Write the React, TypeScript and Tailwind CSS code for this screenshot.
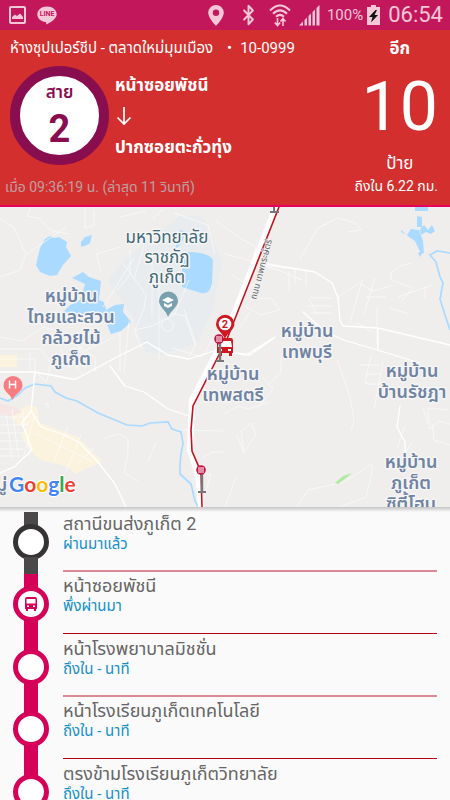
import React from "react";
import { Bluetooth } from "lucide-react";

const stops = [
  { name: "สถานีขนส่งภูเก็ต 2", status: "ผ่านมาแล้ว", state: "passed" },
  { name: "หน้าซอยพัชนี", status: "พึ่งผ่านมา", state: "current" },
  { name: "หน้าโรงพยาบาลมิชชั่น", status: "ถึงใน - นาที", state: "next" },
  { name: "หน้าโรงเรียนภูเก็ตเทคโนโลยี", status: "ถึงใน - นาที", state: "next" },
  { name: "ตรงข้ามโรงเรียนภูเก็ตวิทยาลัย", status: "ถึงใน - นาที", state: "next" },
];

function StatusBar() {
  return (
    <div className="flex h-[30px] shrink-0 items-center justify-between bg-[#c2185b] pr-[7px] pl-[9px] text-[#f3c6d8]">
      <div className="flex items-center gap-[11px]">
        <svg viewBox="0 0 17 18" className="h-[18px] w-[17px]" aria-hidden="true">
          <rect x="1" y="1" width="15" height="16" rx="1" fill="none" stroke="currentColor" strokeWidth="2" />
          <path d="M3 13V11L6 8.500 8 10 11 7.500 14 11V13Z" fill="currentColor" />
        </svg>
        <div className="relative h-[19px] w-5">
          <svg viewBox="0 0 20 19" className="absolute inset-0" aria-hidden="true">
            <path d="M10 .5C4.500.5.3 4 .3 8.300c0 4 3.300 7.200 8 7.700 1 .2 1.200.8.900 2.600 4-1.800 10.500-5.600 10.500-10.300C19.700 4 15.500.5 10 .5Z" fill="currentColor" />
          </svg>
          <span className="absolute inset-x-0 top-[4px] text-center text-[7px] leading-[9px] font-bold text-[#c2185b]">LINE</span>
        </div>
      </div>
      <div className="flex items-center">
        <svg viewBox="0 0 16 21" className="mr-[14px] h-[21px] w-4" aria-hidden="true">
          <path fillRule="evenodd" d="M8 0a7.800 7.800 0 0 0-7.800 7.800C.2 13 8 21 8 21s7.800-8 7.800-13.200A7.800 7.800 0 0 0 8 0Zm0 4.500a3.200 3.200 0 1 1 0 6.400 3.200 3.200 0 0 1 0-6.400Z" fill="currentColor" />
        </svg>
        <Bluetooth className="mr-[10px] h-[22px] w-[21px]" strokeWidth={2.2} preserveAspectRatio="none" aria-hidden="true" />
        <svg viewBox="0 0 22 23" className="mr-[8px] h-[23px] w-[22px]" fill="none" stroke="currentColor" strokeWidth="2" aria-hidden="true">
          <path d="M1 6.500Q11-3.500 21 6.500M4 9.800Q11 3 18 9.800M7 12.800Q11 9 15 12.800" />
          <path d="M8.500 14v7M5.800 18.500l2.700 3 2.700-3M14 22v-7M11.500 17.500l2.500-3 2.500 3" strokeWidth="1.600" />
        </svg>
        <svg viewBox="0 0 21 21" className="mr-[7px] h-[21px] w-[21px]" fill="currentColor" aria-hidden="true">
          <path d="M0 20.500 4 16.500V20.500ZM5.500 15 8 12.500V20.500H5.500ZM9.500 11 12 8.500V20.500H9.500ZM13.500 7 16 4.500V20.500H13.500ZM17.500 3 20.500 0V20.500H17.500Z" />
        </svg>
        <span className="mr-[4px] text-[15px] leading-5">100%</span>
        <svg viewBox="0 0 13 20" className="mr-[8px] h-5 w-[13px]" aria-hidden="true">
          <path d="M4 0h5v2h4v18H0V2h4Z" fill="currentColor" />
          <path d="M8.500 5 2 12h3.500L4 17.500 11 10H7.500L10 5Z" fill="#111" />
        </svg>
        <span className="text-[22px] leading-[30px]">06:54</span>
      </div>
    </div>
  );
}

function DownArrow() {
  return (
    <svg viewBox="0 0 16 20" className="my-[9px] ml-px h-5 w-4" fill="none" stroke="currentColor" strokeWidth="1.700" aria-hidden="true">
      <path d="M8 1v17M1.500 11.500 8 18l6.500-6.500" />
    </svg>
  );
}

function TripHeader() {
  return (
    <header className="flex h-[177px] shrink-0 justify-between border-b-2 border-[#e6005c] bg-[#d32f2f] text-white">
      <div className="flex flex-col">
        <h1 className="mt-[6px] ml-[10px] flex gap-[8px] text-[15px] leading-6">
          <span>ห้างซุปเปอร์ชีป - ตลาดใหม่มุมเมือง</span>
          <span className="ml-[6px]">•</span>
          <span>10-0999</span>
        </h1>
        <div className="mt-[6px] ml-[10px] flex gap-[6px]">
          <div className="flex h-[99px] w-[99px] flex-col items-center rounded-full border-[10px] border-[#880e4f] bg-white text-[#880e4f]">
            <span className="mt-[4px] text-[17px] leading-6 font-semibold">สาย</span>
            <span className="mt-[3px] text-[38px] leading-[44px] font-bold">2</span>
          </div>
          <div className="flex flex-col pt-[7px] text-[17px] leading-6 font-bold">
            <span>หน้าซอยพัชนี</span>
            <DownArrow />
            <span>ปากซอยตะกั่วทุ่ง</span>
          </div>
        </div>
        <p className="mt-[12px] ml-[5px] text-[14px] leading-5 text-[#bda0a0]">เมื่อ 09:36:19 น. (ล่าสุด 11 วินาที)</p>
      </div>
      <div className="mr-[12px] flex flex-col items-end">
        <div className="flex flex-col items-center">
          <span className="mt-[6px] text-[17px] leading-6 font-bold">อีก</span>
          <span className="mt-[11px] text-[68px] leading-[72px]">10</span>
          <span className="mt-[8px] text-[17px] leading-6">ป้าย</span>
        </div>
        <span className="mt-px text-[14px] leading-5">ถึงใน 6.22 กม.</span>
      </div>
    </header>
  );
}

function MapLabel({ x, y, lines, university = false }: { x: number; y: number; lines: string[]; university?: boolean }) {
  return (
    <text
      textAnchor="middle"
      paintOrder="stroke"
      stroke="#f5f5f5"
      strokeWidth="3"
      strokeLinejoin="round"
      fill={university ? "#426875" : "#6f84a3"}
      fontWeight={university ? 400 : 600}
      fontSize={university ? 17 : 18}
    >
      {lines.map((line, i) => (
        <tspan key={line} x={x} y={y + i * (university ? 20 : 21)}>
          {line}
        </tspan>
      ))}
    </text>
  );
}

function StopPole({ x, y }: { x: number; y: number }) {
  return (
    <g>
      <path d={`M${x + 1} ${y + 4}v19`} stroke="#77777a" strokeWidth="2.400" />
      <path d={`M${x - 3} ${y + 22}h8`} stroke="#77777a" strokeWidth="2" />
      <circle cx={x} cy={y} r="4.800" fill="#bd1740" />
      <rect x={x - 3} y={y - 3} width="6" height="6" fill="#e38ba4" />
    </g>
  );
}

function RouteMap() {
  return (
    <section className="h-[300px] shrink-0 overflow-hidden bg-[#efeeec]" aria-label="แผนที่">
      <svg viewBox="0 0 450 300" preserveAspectRatio="xMidYMid slice" className="h-full w-full">
        <rect width="450" height="300" fill="#efeeed" />
        <path d="M180 9h22l20 45-9 47-15 35-35 12-18-3-12-35-25-36 17-22Z" fill="#e8ecee" />
        <g fill="#fcf3df">
          <path d="M0 148h17v12H0ZM12 210l15-12 10 2 3 16 38 14 24 24-6 4-9 3-11 6-10-8-26-6-12-12-7-13 6-8-3-3-6 2Z" />
        </g>
        <path d="M0 196 17 201 22 205 10 210 0 206Z" fill="#f7e5e5" />
        <g fill="#aadaff">
          <path d="m45 32 5-3 4 2 5-1 8 5-1 5 5 9-8 9-6 10-7 1-10-4-4-7 4-17Z" />
          <path d="m81 35 4-5 7-2-2 8-3 2-6 2ZM72 71l11-6 6 5 12 4-2 19 5 2 2 8 9-5 9-1-1 8 8 10-10 9-10 3-5-12-7-6-9-1-12 1-15-4 7-7 10-5 5-16Z" />
          <path d="M182 48q1-3 9-3 19 1 22 8l-1 23q-2 12-11 10l-19-6ZM180 23l5 2-3 10-6 7-1-9ZM415 0h13v4h-13ZM417 9l5 1v10h-5ZM401 25l6 3 4-6 8 1 4 11 1 12-3 1-6-13-6-4-8-7ZM420 22l4-4 4 5 4-5 3 6-4 3-5-2-5 3ZM418 46l6-3-4 7Z" />
        </g>
        <g fill="none" stroke="#aadaff">
          <path d="M0 191 8 194 18 188 25 181 35 177 51 179 55 185 66 191 77 194 98 206 127 218 142 219 150 216 168 215 172 222 181 225 183 236 181 247 180 257 180 267 191 277 195 294 198 300" strokeWidth="1.700" />
          <path d="M450 46 437 44 430 48 436 55 440 70 443 76 440 92 446 111 450 123" strokeWidth="1.700" />
        </g>
        <g fill="none" stroke="#fff" strokeWidth="0.700" opacity="0.850">
          <path d="M0 12 14 20 26 47 20 63 0 70M27 47 66 20M31 0l-4 9 15 3M41 14l11 10 17 3M85 0v21l9-2V4M120 10l26-6M153 12l10-10M174 6l34 12 7 29M120 40l-24 7 5 17M130 43v24l-13 17M0 130 22 134 43 120 68 127 82 145 115 130M30 145v18M60 142l10 20M88 128l-15 28 10 12M120 125v39M129 114l-5 50" />
          <path d="M122 55 146 88 144 102 135 123M144 39 134 72M134 51 114 83 103 100M152 47v63M159 80v74M165 105l20 4 10 29M142 142l-8-19 18-4 23-12 14-34M184 102l12 35-7 13M172 141l30 9 11-18M167 112a6 6 0 1 0 1 12a6 6 0 1 0-1-12" />
          <path d="M215 13 240 31 256 40 252 54 225 47M263 59l13 3 26 11M250 93l21-2 9 12M245 99l15 9 19-5M263 58 286 61M300 52l18-31 20-10 18 5 5 7-13 2M295 62v15M289 64v20M306 62v17M310 91h21M308 99h23M311 106h21M309 92l8 15M232 68l16 10M240 78h17M250 105l-10 15" />
          <path d="M337 91l22-15 14 8 20-6M362 73l-12 43M375 71l-11 36M389 68l10-9 13-3M391 64v9l20 7M390 101l19 6M425 91v-11M413 80l-12 15M398 90l34-12M377 100v37M356 115l16 10M366 90h20" />
          <path d="M0 142h41l10 14-4 18M0 152h35v12l12 12M65 130l30 20v15M0 210h31M0 218h29M0 226h26M0 234h25M0 242h23M0 249h20M6 206l6 45M12 202l6 45M22 201l8 48M35 207l-12 45M44 197h4v6M38 209l-16 10M68 219l-14 35M81 228l-15 37M95 240l-18 18M35 226l58 29M104 231l15-4 9 5v14l-4 20 14 8M148 254l8-18M183 223l40 1M212 245h11M203 250l10-5M193 263l18 5-7 22" />
          <path d="M223 207l16-8 10 3 20-7M237 228l7 18M244 246l12-19-5-11-10 8ZM263 171l10 11-16 20M281 150v15l-12 13M337 153l8 22 5 15 4 24-3 10M371 148l-6 28 10 2M383 154l-9 48M359 158h21M365 167h16M366 177h15M423 201l7 21 9-8 11 3M429 216l-1-15 20 2M432 217l2 16 16 5M405 219l-8 22M412 235l-10 16M225 300l11-30M297 300l11-17 36-8 22-14q8-9 6 5l-6 24-27 10" />
        </g>
        <g fill="none" stroke="#fff" strokeLinecap="round" strokeLinejoin="round">
          <path d="M0 165 35 165 72 172 76 172 115 151 147 135 168 148 189 152 217 143 250 148 274 131M110 159 125 179 144 185 168 202 195 211 M35 165 31 204 41 220 65 228 80 236 98 255 115 277 126 300M31 204 22 216 32 243 16 258" strokeWidth="1.300" />
          <path d="M267 57 284 60 315 65 332 76 338 91 340 113 343 119 378 121 450 138M303 105 326 125 344 133 420 156M224 144 246 148 275 130M0 266 16 259M400 199 397 220 405 235 405 260M378 121v21" strokeWidth="1.300" />
          <path d="M276 0 225 130 192 193 190 243 198 268 201 300" strokeWidth="6" />
        </g>
        <path d="m335 276 8-7 9-3-6 5-8 6Z" fill="#aeeaa0" />
        <path d="M279 0 227 132 193 199 191 223 192 244 201 265 202 300" fill="none" stroke="#c3141d" strokeWidth="1.600" />
        <path d="M274 0v5m-4 0h9" stroke="#77777a" strokeWidth="2" />
        <text transform="translate(256 93) rotate(-75)" fontSize="9" fill="#666" stroke="#f4f4f4" strokeWidth="1" paintOrder="stroke">ถนน เทพกระษัตรี</text>

        <MapLabel x={167} y={36} lines={["มหาวิทยาลัย", "ราชภัฏ", "ภูเก็ต"]} university />
        <MapLabel x={71} y={95} lines={["หมู่บ้าน", "ไทยและสวน", "กล้วยไม้", "ภูเก็ต"]} />
        <MapLabel x={307} y={130} lines={["หมู่บ้าน", "เทพบุรี"]} />
        <MapLabel x={233} y={173} lines={["หมู่บ้าน", "เทพสตรี"]} />
        <MapLabel x={412} y={170} lines={["หมู่บ้าน", "บ้านรัชฎา"]} />
        <MapLabel x={411} y={261} lines={["หมู่บ้าน", "ภูเก็ต", "ซิตี้โฮม"]} />
        <MapLabel x={-4} y={284} lines={["หมู่"]} />

        <path d="M168 110c-2-7-9-10-9-16a9.500 9.500 0 0 1 19 0c0 6-7 9-10 16Z" fill="#78a0ae" />
        <path d="m162 93 6-3 6 3-6 3Zm2 3 4 2 4-2v3l-4 2-4-2Z" fill="#fff" />
        <path d="M12.500 193c-2-6-9-8-9-14.500a9.500 9.500 0 0 1 19 0c0 6.500-8 8.500-10 14.500Z" fill="#f87c81" />
        <path d="M9.500 173.500v8m6-8v8m-6-4h6" stroke="#fff" strokeWidth="1.500" />

        <g>
          <path d="M225 132c-2-6-9-9-9-15a9.200 9.200 0 0 1 18.400 0c0 6-7.400 9-9.400 15Z" fill="#cf171f" />
          <circle cx="225" cy="117" r="6.300" fill="#fff" />
          <text x="225" y="121" textAnchor="middle" fontSize="11" fontWeight="700" fill="#cf171f">2</text>
          <path d="M219 131h12q2 0 2 3v12h-1v3h-3v-3h-7v3h-3v-3h-2v-12q0-3 2-3Z" fill="#cf171f" />
          <path d="M219 134h12l1 6h-14ZM219 142h3v2h-3ZM228 142h3v2h-3Z" fill="#fff" />
        </g>
        <StopPole x={219} y={132} />
        <StopPole x={201} y={263} />
        <text x="9" y="285" fontFamily="Lato, sans-serif" fontSize="21" fontWeight="700" stroke="#fff" strokeWidth="2" paintOrder="stroke">
          <tspan fill="#4285f4">G</tspan><tspan fill="#ea4335">o</tspan><tspan fill="#fbbc05">o</tspan><tspan fill="#4285f4">g</tspan><tspan fill="#34a853">l</tspan><tspan fill="#ea4335">e</tspan>
        </text>
      </svg>
    </section>
  );
}

function BusIcon() {
  return (
    <svg viewBox="0 0 12 14" className="h-[14px] w-3" aria-hidden="true">
      <path fillRule="evenodd" d="M2 0h8q2 0 2 3v9h-1v2H9v-2H3v2H1v-2H0V3q0-3 2-3ZM1.500 2v4.500h9V2ZM2 8.500v1.500h2V8.500Zm6 0v1.500h2V8.500Z" fill="#d50057" />
    </svg>
  );
}

function StopList() {
  return (
    <main className="min-h-0 flex-1 overflow-hidden bg-[#fafafa]">
      <div className="h-[5px] bg-linear-to-b from-[#c4c4c4] to-[#fafafa]" />
      <ol>
        {stops.map((stop) => {
          const passed = stop.state === "passed";
          return (
            <li key={stop.name} className="group flex px-[13px] odd:h-[62px] even:h-[63px]">
              <div className="flex w-9 shrink-0 flex-col items-center">
                <div className={`h-[15px] w-[14px] shrink-0 ${passed ? "bg-[#4a4849]" : "bg-[#d50057]"}`} />
                <div className={`-my-[3px] flex size-9 shrink-0 items-center justify-center rounded-full border-[5px] bg-white ${passed ? "border-[#353334]" : "border-[#d50057]"}`}>
                  {stop.state === "current" && <BusIcon />}
                </div>
                <div className={`w-[14px] flex-1 ${passed ? "bg-[#4a4849]" : "bg-[#d50057]"}`} />
              </div>
              <div className="ml-[14px] h-[60px] flex-1 border-b border-[#b5000d] group-odd:border-b-2 group-odd:border-[#d98a94]">
                <h2 className="text-[18px] leading-6 text-[#666]">{stop.name}</h2>
                <p className="text-[15px] leading-4 text-[#1590c8]">{stop.status}</p>
              </div>
            </li>
          );
        })}
      </ol>
    </main>
  );
}

export default function App() {
  return (
    <div className="flex h-screen w-full flex-col overflow-hidden bg-[#fafafa] font-[Roboto,'Noto_Sans_Thai','Noto_Sans',sans-serif]">
      <StatusBar />
      <TripHeader />
      <RouteMap />
      <StopList />
    </div>
  );
}
